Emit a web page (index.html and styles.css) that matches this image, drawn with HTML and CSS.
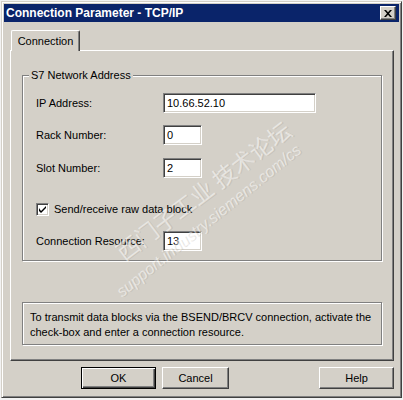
FILE: index.html
```html
<!DOCTYPE html>
<html>
<head>
<meta charset="utf-8">
<link rel="stylesheet" href="styles.css">
</head>
<body>
<div class="window">
  <div class="titlebar">
    <span class="title">Connection Parameter - TCP/IP</span>
    <span class="close"><svg width="8" height="7" viewBox="0 0 8 7"><path d="M0 0h2l2 2.3 2-2.3h2l-3 3.5 3 3.5h-2l-2-2.3-2 2.3h-2l3-3.5z" fill="#000"/></svg></span>
  </div>
  <div class="client">
    <div class="tabstrip"><div class="tab">Connection</div></div>
    <div class="panel">
      <div class="group">
        <div class="legend">S7 Network Address</div>
        <div class="row r-ip"><span class="lbl">IP Address:</span><span class="field w-ip">10.66.52.10</span></div>
        <div class="row r-rack"><span class="lbl">Rack Number:</span><span class="field w-sm">0</span></div>
        <div class="row r-slot"><span class="lbl">Slot Number:</span><span class="field w-sm">2</span></div>
        <div class="row r-chk"><span class="checkbox"><svg width="7" height="7" viewBox="0 0 7 7"><path d="M0 2v3l2 2 5-5v-2l-5 5z" fill="#000"/></svg></span><span>Send/receive raw data block</span></div>
        <div class="row r-res"><span class="lbl">Connection Resource:</span><span class="field w-sm">13</span></div>
      </div>
      <div class="info">To transmit data blocks via the BSEND/BRCV connection, activate the<br>check-box and enter a connection resource.</div>
    </div>
    <div class="buttons">
      <button class="btn btn-default">OK</button>
      <button class="btn btn-cancel">Cancel</button>
      <span class="spacer"></span>
      <button class="btn">Help</button>
    </div>
  </div>
  <div class="wm wm-cn">西门子工业 技术论坛</div>
  <div class="wm wm-url">support.industry.siemens.com/cs</div>
</div>
</body>
</html>
```
FILE: styles.css
```css
* { box-sizing: border-box; }
html, body { margin: 0; padding: 0; }
body {
  width: 403px;
  height: 400px;
  overflow: hidden;
  background: #f2f2f2;
  font-family: "Liberation Sans", Arial, sans-serif;
  font-size: 11px;
  color: #000;
}
.window {
  position: relative;
  margin: 1px 0 0 1px;
  width: 401px;
  height: 397px;
  background: #d4d0c8;
  border: 1px solid;
  border-color: #d4d0c8 #404040 #404040 #d4d0c8;
  box-shadow: inset 1px 1px 0 #fff, inset -1px -1px 0 #808080;
  padding: 2px;
  overflow: hidden;
}
.titlebar {
  height: 18px;
  background: #0a246a;
  color: #fff;
  display: flex;
  align-items: center;
  justify-content: space-between;
  padding: 0 3px 0 2px;
}
.title {
  font-weight: bold;
  font-size: 12px;
  white-space: nowrap;
}
.close {
  width: 16px;
  height: 14px;
  background: #d4d0c8;
  border: 1px solid;
  border-color: #fff #404040 #404040 #fff;
  box-shadow: inset -1px -1px 0 #808080;
  display: flex;
  align-items: center;
  justify-content: center;
}
.client {
  padding: 8px 5px 0 6px;
}
.tabstrip {
  height: 20px;
  padding-left: 1px;
  display: flex;
}
.tab {
  position: relative;
  z-index: 1;
  width: 69px;
  height: 21px;
  background: #d4d0c8;
  border-top: 1px solid #fff;
  border-left: 1px solid #fff;
  border-right: 1px solid #404040;
  box-shadow: inset -1px 0 0 #808080;
  border-top-left-radius: 2px;
  border-top-right-radius: 2px;
  display: flex;
  align-items: center;
  justify-content: center;
  padding-bottom: 1px;
}
.panel {
  height: 311px;
  border-top: 1px solid #fff;
  border-left: 1px solid #fff;
  border-right: 1px solid #404040;
  border-bottom: 1px solid #404040;
  box-shadow: inset -1px -1px 0 #808080;
  padding: 0 10px 0 11px;
  display: flex;
  flex-direction: column;
}
.group {
  margin-top: 24px;
  width: 360px;
  height: 186px;
  border: 1px solid #808080;
  box-shadow: inset 1px 1px 0 #fff, 1px 1px 0 #fff;
  display: flex;
  flex-direction: column;
}
.legend {
  align-self: flex-start;
  margin: -7px 0 0 6px;
  padding: 0 2px;
  height: 13px;
  line-height: 13px;
  background: #d4d0c8;
}
.row {
  height: 20px;
  display: flex;
  align-items: center;
  padding-left: 13px;
}
.r-ip { margin-top: 11px; }
.r-rack { margin-top: 12px; }
.r-slot { margin-top: 13px; }
.r-chk { margin-top: 21px; }
.r-res { margin-top: 12px; }
.lbl { width: 127px; }
.field {
  height: 20px;
  line-height: 18px;
  background: #fff;
  border: 1px solid;
  border-color: #808080 #fff #fff #808080;
  box-shadow: inset 1px 1px 0 #404040, inset -1px -1px 0 #d4d0c8;
  padding-left: 3px;
}
.w-ip { width: 153px; }
.w-sm { width: 39px; }
.checkbox {
  width: 13px;
  height: 13px;
  background: #fff;
  border: 1px solid;
  border-color: #808080 #fff #fff #808080;
  box-shadow: inset 1px 1px 0 #404040, inset -1px -1px 0 #d4d0c8;
  margin-right: 5px;
  display: flex;
  align-items: center;
  justify-content: center;
}
.info {
  margin-top: 41px;
  width: 360px;
  height: 43px;
  border: 1px solid #808080;
  box-shadow: inset 1px 1px 0 #fff, 1px 1px 0 #fff;
  padding: 7px 0 0 7px;
  line-height: 15px;
  white-space: nowrap;
}
.buttons {
  margin-top: 6px;
  display: flex;
  padding-left: 71px;
}
.spacer { flex: 1; }
.btn {
  height: 22px;
  width: 75px;
  padding: 0;
  margin: 0;
  font-family: "Liberation Sans", Arial, sans-serif;
  font-size: 11px;
  color: #000;
  background: #d4d0c8;
  border: 1px solid;
  border-color: #fff #404040 #404040 #fff;
  box-shadow: inset -1px -1px 0 #808080;
}
.btn-default {
  border: 1px solid #000;
  box-shadow: inset 1px 1px 0 #fff, inset -1px -1px 0 #404040, inset -2px -2px 0 #808080;
}
.btn-cancel {
  width: 67px;
  margin-left: 6px;
}
.wm {
  position: absolute;
  white-space: nowrap;
  pointer-events: none;
  color: rgba(255, 255, 255, 0.5);
  text-shadow: 1px 1px 0 rgba(160, 155, 145, 0.25);
}
.wm-cn {
  left: 201px;
  top: 188px;
  font-family: "Noto Sans CJK SC", sans-serif;
  font-size: 23px;
  transform: translate(-50%, -50%) rotate(-37deg);
}
.wm-url {
  left: 207px;
  top: 219px;
  font-family: "Liberation Sans", Arial, sans-serif;
  font-size: 16px;
  font-style: italic;
  transform: translate(-50%, -50%) rotate(-39deg);
}
```
